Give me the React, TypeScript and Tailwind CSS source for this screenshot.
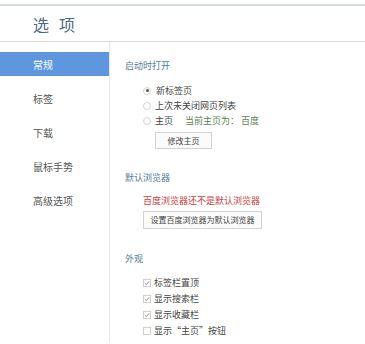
import React from 'react';

const font = { fontFamily: '"Noto Sans CJK SC", "Noto Sans", sans-serif' };

function Radio({ checked }: { checked?: boolean }) {
  return (
    <span className="flex h-[8px] w-[8px] items-center justify-center rounded-full border border-[#d4d4d4] bg-white">
      {checked && <span className="h-[3px] w-[3px] rounded-full bg-[#555]" />}
    </span>
  );
}

function Check({ checked }: { checked?: boolean }) {
  return (
    <span className="flex h-[8px] w-[8px] items-center justify-center border border-[#cfcfcf] bg-white">
      {checked && (
        <svg width="6" height="6" viewBox="0 0 6 6">
          <path d="M0.8 3.2 L2.3 4.6 L5.2 1.2" fill="none" stroke="#7a7a7a" strokeWidth="0.8" />
        </svg>
      )}
    </span>
  );
}

const navItems = ['常规', '标签', '下载', '鼠标手势', '高级选项'];

export default function App() {
  return (
    <div className="h-[344px] w-[365px] overflow-hidden bg-white text-[#444]" style={font}>
      <div className="pt-[4px]">
        <div className="h-[2px] bg-[#d3dae6]" />
      </div>
      <div className="flex h-[36px] items-center border-b border-[#dadada] pl-[33px] text-[16px] tracking-[10px] text-[#4a6784]">
        选项
      </div>
      <div className="flex h-[301px]">
        <div className="flex w-[110px] flex-col gap-[10px] border-r border-[#e8e8e8] pt-[10px]">
          {navItems.map((item, i) => (
            <div
              key={item}
              className={
                i === 0
                  ? 'flex h-[24px] items-center bg-[#5e97df] pl-[33px] text-[10px] text-white'
                  : 'flex h-[24px] items-center pl-[33px] text-[10px] text-[#555]'
              }
            >
              {item}
            </div>
          ))}
        </div>
        <div className="flex-1 pl-[15px] pt-[17px] text-[9px]">
          <div className="h-[14px] leading-[14px] text-[#4f7d99]">启动时打开</div>
          <div className="ml-[18px] mt-[10px]">
            <div className="flex h-[15px] items-center gap-[4px]">
              <Radio checked />
              <span className="ml-[1px]">新标签页</span>
            </div>
            <div className="flex h-[15px] items-center gap-[4px]">
              <Radio />
              <span>上次未关闭网页列表</span>
            </div>
            <div className="flex h-[15px] items-center gap-[4px]">
              <Radio />
              <span>主页</span>
              <span className="ml-[8px] text-[#5c7f4f]">当前主页为： 百度</span>
            </div>
            <button className="ml-[12px] mt-[4px] h-[17px] w-[57px] border border-[#d2d2d2] bg-[#fbfbfb] text-[8px] text-[#444]">
              修改主页
            </button>
          </div>

          <div className="mt-[22px] h-[14px] leading-[14px] text-[#4f7d99]">默认浏览器</div>
          <div className="ml-[18px] mt-[9px]">
            <div className="h-[14px] leading-[14px] text-[#c9403a]">百度浏览器还不是默认浏览器</div>
            <button className="mt-[3px] h-[18px] w-[119px] border border-[#d2d2d2] bg-[#fbfbfb] text-[8px] text-[#444]">
              设置百度浏览器为默认浏览器
            </button>
          </div>

          <div className="mt-[23px] h-[14px] leading-[14px] text-[#4f7d99]">外观</div>
          <div className="ml-[18px] mt-[9px]">
            {[
              ['标签栏置顶', true],
              ['显示搜索栏', true],
              ['显示收藏栏', true],
              ['显示“主页”按钮', false],
            ].map(([label, on]) => (
              <div key={label as string} className="flex h-[16px] items-center gap-[3px]">
                <Check checked={on as boolean} />
                <span>{label as string}</span>
              </div>
            ))}
          </div>
        </div>
      </div>
    </div>
  );
}
